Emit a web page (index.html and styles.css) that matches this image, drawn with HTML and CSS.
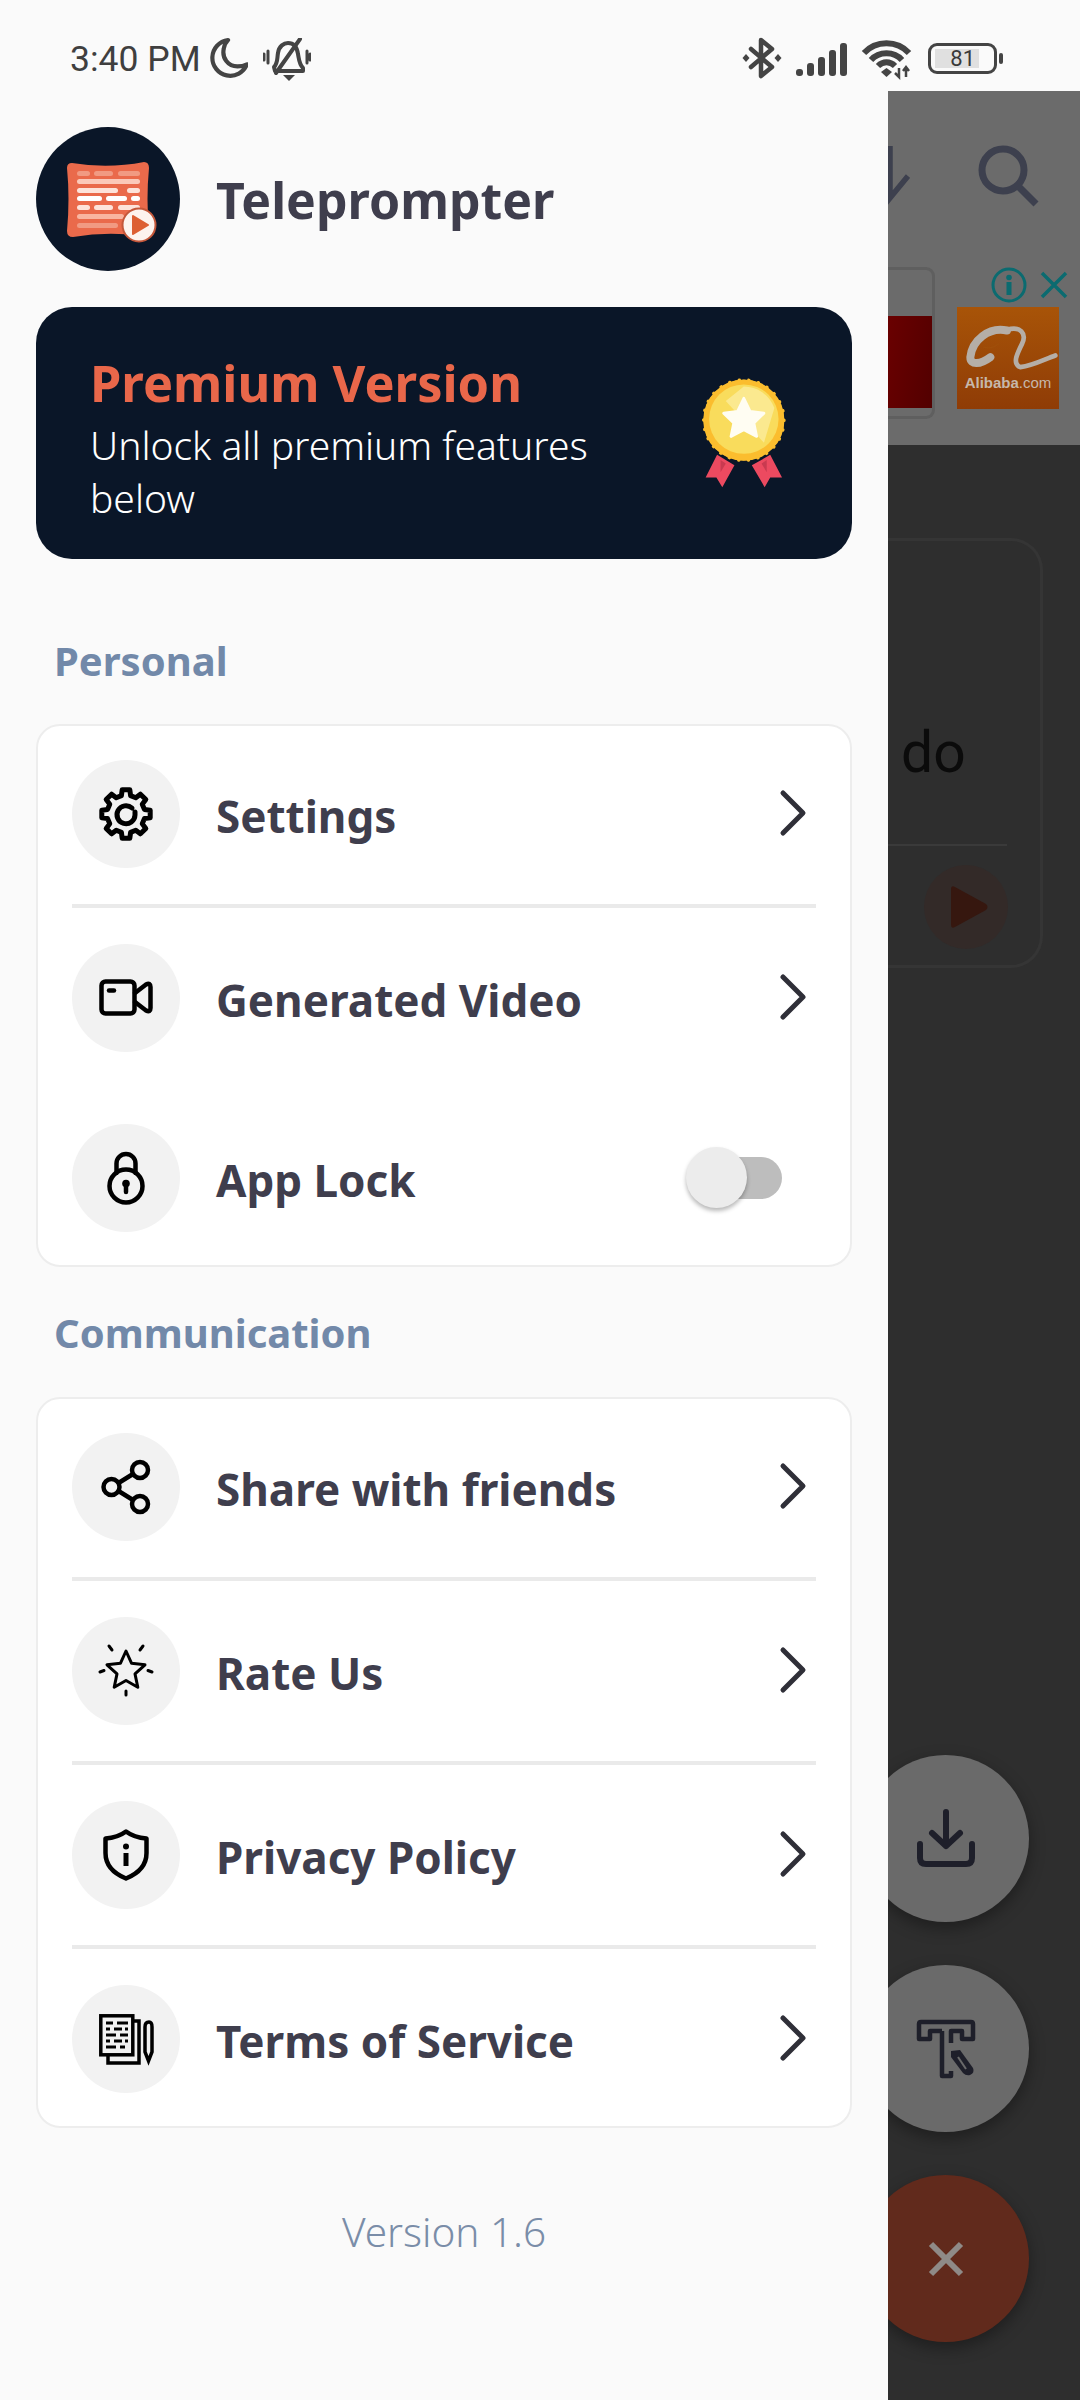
FILE: index.html
```html
<!DOCTYPE html>
<html lang="en">
<head>
<meta charset="utf-8">
<title>Teleprompter</title>
<link rel="stylesheet" href="styles.css">
</head>
<body>
<div class="screen">
  <header class="statusbar">
    <div class="status-left">
      <span class="time">3:40 PM</span>
      <svg class="moon" viewBox="0 0 38 38"><path d="M19 2 A17 17 0 1 0 37 25 C35 26 31 27 28 27 C19 27 13 19 15 10 C15.500 7 17 4 19 2 Z" fill="none" stroke="#444" stroke-width="4" stroke-linejoin="round"/></svg>
      <svg class="bell" viewBox="0 0 48 43"><g fill="none" stroke="#444" stroke-linecap="round" stroke-linejoin="round"><path d="M11 29 C15 25 14 20 15 15 C16 8 21 5 25 5 C31 5 34 9 35 16 C36 21 36 26 40 30 L40 33 H12 Z" stroke-width="4"/><path d="M37 1 L13 35" stroke-width="4"/><path d="M5 13 V25 M1 16 V22 M44 13 V25 M47 16 V22" stroke-width="3"/></g><path d="M20 37 H32 L26 43 Z" fill="#444"/></svg>
    </div>
    <div class="status-right">
      <svg class="bt" viewBox="0 0 38 42"><path d="M8 12 L29 30 L18 39 V3 L29 12 L8 30" fill="none" stroke="#444" stroke-width="4.500" stroke-linejoin="round" stroke-linecap="round"/><path d="M3 17 L6.500 21 L3 25 L-.5 21 Z M35 17 L38.500 21 L35 25 L31.500 21 Z" fill="#444"/></svg>
      <svg class="signal" viewBox="0 0 51 33"><g fill="#444"><rect x="0" y="26" width="7" height="7" rx="3"/><rect x="11" y="20" width="7" height="13" rx="3"/><rect x="22" y="14" width="7" height="19" rx="3"/><rect x="33" y="7" width="7" height="26" rx="3"/><rect x="44" y="0" width="7" height="33" rx="3"/></g></svg>
      <svg class="wifi" viewBox="0 0 49 36"><g fill="none" stroke="#444" stroke-width="6"><path d="M2 12 C14 -1 35 -1 47 12"/><path d="M9 19 C17 10 32 10 40 19"/><path d="M16 25 C21 20 28 20 33 25"/></g><path d="M19 31 L24.500 27 L30 31 L24.500 36 Z" fill="#444"/><path d="M37 27 V36 M33 32 L37 36 L37 27 M44 36 V26 M41 30 L44 26 L47 30" fill="none" stroke="#444" stroke-width="2.500"/></svg>
      <div class="battery-wrap">
        <div class="battery"><span class="battery-fill">81</span></div>
        <span class="battery-tip"></span>
      </div>
    </div>
  </header>

  <div class="body">
    <nav class="drawer">
      <div class="brand">
        <svg class="avatar" viewBox="0 0 144 144">
          <circle cx="72" cy="72" r="72" fill="#0a1628"/>
          <path d="M36 36 Q72 42 108 35 Q113 35 113 41 Q110 72 113 104 Q112 110 106 109 Q72 104 37 110 Q31 110 31 104 Q34 72 31 41 Q31 36 36 36 Z" fill="#ea6a4b"/>
          <g>
            <g fill="#f19a82"><rect x="41" y="44" width="13" height="5" rx="2.500"/><rect x="58" y="44" width="19" height="5" rx="2.500"/><rect x="82" y="44" width="22" height="5" rx="2.500"/><rect x="41" y="96" width="41" height="5" rx="2.500"/></g>
            <rect x="41" y="52" width="63" height="5" rx="2.500" fill="#fbc9b9"/>
            <g fill="#fde3da"><rect x="41" y="61" width="41" height="5" rx="2.500"/><rect x="91" y="61" width="13" height="5" rx="2.500"/><rect x="41" y="78" width="13" height="5" rx="2.500"/><rect x="58" y="78" width="19" height="5" rx="2.500"/><rect x="82" y="78" width="22" height="5" rx="2.500"/></g>
            <g fill="#fff"><rect x="41" y="69" width="25" height="5" rx="2.500"/><rect x="70" y="69" width="21" height="5" rx="2.500"/><rect x="95" y="69" width="9" height="5" rx="2.500"/></g>
            <rect x="41" y="87" width="47" height="5" rx="2.500" fill="#f9b5a0"/>
          </g>
          <circle cx="103" cy="98" r="16.500" fill="#fdf3ee" stroke="#c4573a" stroke-width="2"/>
          <path d="M97 89 L112 98 L97 107 Z" fill="#dd5f33" stroke="#dd5f33" stroke-width="2" stroke-linejoin="round"/>
        </svg>
        <span class="brand-name">Teleprompter</span>
      </div>

      <section class="premium">
        <div class="premium-text">
          <h2 class="premium-title">Premium Version</h2>
          <p class="premium-sub">Unlock all premium features below</p>
        </div>
        <svg class="medal" viewBox="60 55 265 330">
          <path d="M115 285 L165 315 L130 378 L113 350 L82 350 Z" fill="#ec4a60"/>
          <path d="M268 285 L215 315 L252 378 L268 350 L302 350 Z" fill="#ec4a60"/>
          <path d="M125 300 L140 310 L125 335 Z M258 300 L243 310 L258 335 Z" fill="#c93a50"/>
          <circle cx="192" cy="185" r="116" fill="#fbbd2e" stroke="#fbbd2e" stroke-width="9" stroke-dasharray="1 27" stroke-linecap="round"/>
          <circle cx="192" cy="185" r="117" fill="#fbbd2e"/>
          <circle cx="192" cy="182" r="100" fill="#f9dc5c"/>
          <path d="M192 88 A94 94 0 0 1 280 150 L250 250 L140 130 Z" fill="#fbe98f"/>
          <path d="M192 122 L210 160 L250 165 L221 193 L229 232 L192 213 L155 232 L163 193 L134 165 L174 160 Z" fill="#fffdf2" stroke="#fffdf2" stroke-width="8" stroke-linejoin="round"/>
        </svg>
      </section>

      <h3 class="section-title first">Personal</h3>
      <div class="card">
        <a class="row">
          <span class="icon-circle"><svg class="icon" viewBox="0 0 54 54"><g fill="none" stroke="#000" stroke-width="5" stroke-linejoin="round" stroke-linecap="round"><path d="M45.400 22.400 L51.200 23.170 L51.200 30.830 L45.400 31.600 L43.260 36.760 L46.820 41.400 L41.400 46.820 L36.760 43.260 L31.600 45.400 L30.830 51.200 L23.170 51.200 L22.400 45.400 L17.240 43.260 L12.600 46.820 L7.180 41.400 L10.740 36.760 L8.600 31.600 L2.800 30.830 L2.800 23.170 L8.600 22.400 L10.740 17.240 L7.180 12.600 L12.600 7.180 L17.240 10.740 L22.400 8.600 L23.170 2.800 L30.830 2.800 L31.600 8.600 L36.760 10.740 L41.400 7.180 L46.820 12.600 L43.260 17.240 Z"/><path d="M33 21 A9 9 0 1 0 36 28 V25"/></g></svg></span>
          <span class="row-label">Settings</span>
          <svg class="chevron" viewBox="0 0 34 48"><path d="M6 4 L26 24 L6 44" /></svg>
        </a>
        <div class="divider"></div>
        <a class="row">
          <span class="icon-circle"><svg class="icon" viewBox="0 0 54 54"><g fill="none" stroke="#000" stroke-width="4.500" stroke-linejoin="round" stroke-linecap="round"><rect x="2.500" y="10.500" width="33" height="32" rx="4"/><path d="M36 22 L47 13.500 Q51.500 11 51.500 16 V37 Q51.500 42 47 39.500 L36 31"/><path d="M10 19.500 H15"/></g></svg></span>
          <span class="row-label">Generated Video</span>
          <svg class="chevron" viewBox="0 0 34 48"><path d="M6 4 L26 24 L6 44" /></svg>
        </a>
        <a class="row row-spaced">
          <span class="icon-circle"><svg class="icon" viewBox="0 0 54 54"><g fill="none" stroke="#000" stroke-width="4.500" stroke-linecap="round"><path d="M17.500 22 V12.500 A9.500 9.500 0 0 1 36.500 12.500 V22"/><circle cx="27" cy="35" r="16.500"/><path d="M27 34 V41"/></g><circle cx="27" cy="32.500" r="3.800" fill="#000"/></svg></span>
          <span class="row-label">App Lock</span>
          <span class="toggle"><span class="toggle-thumb"></span></span>
        </a>
      </div>

      <h3 class="section-title">Communication</h3>
      <div class="card">
        <a class="row">
          <span class="icon-circle"><svg class="icon" viewBox="0 0 54 54"><g fill="none" stroke="#000" stroke-width="4.500"><circle cx="41" cy="10" r="8"/><circle cx="12.500" cy="27" r="8"/><circle cx="41" cy="44" r="8"/><path d="M19.500 23 L34 14 M19.500 31 L34 40"/></g></svg></span>
          <span class="row-label">Share with friends</span>
          <svg class="chevron" viewBox="0 0 34 48"><path d="M6 4 L26 24 L6 44" /></svg>
        </a>
        <div class="divider"></div>
        <a class="row">
          <span class="icon-circle"><svg class="icon" viewBox="0 0 54 54"><g fill="none" stroke="#000" stroke-linecap="round" stroke-linejoin="round"><path d="M27 7 L32.600 19.300 L46 20.800 L36 29.900 L38.800 43.200 L27 36.500 L15.200 43.200 L18 29.900 L8 20.800 L21.400 19.300 Z" stroke-width="3"/><path d="M10 2 L13 6 M44 2 L41 6 M1 28 L5 26.500 M53 28 L49 26.500 M27 47 V51" stroke-width="3"/></g></svg></span>
          <span class="row-label">Rate Us</span>
          <svg class="chevron" viewBox="0 0 34 48"><path d="M6 4 L26 24 L6 44" /></svg>
        </a>
        <div class="divider"></div>
        <a class="row">
          <span class="icon-circle"><svg class="icon" viewBox="0 0 54 54"><path d="M27 3.500 C33 8 40 10 47.500 10.500 V25 C47.500 38 38 46 27 50.500 C16 46 6.500 38 6.500 25 V10.500 C14 10 21 8 27 3.500 Z" fill="none" stroke="#000" stroke-width="4.500" stroke-linejoin="round"/><circle cx="27" cy="18.500" r="3" fill="#000"/><rect x="24.500" y="25" width="5" height="13" fill="#000"/></svg></span>
          <span class="row-label">Privacy Policy</span>
          <svg class="chevron" viewBox="0 0 34 48"><path d="M6 4 L26 24 L6 44" /></svg>
        </a>
        <div class="divider"></div>
        <a class="row">
          <span class="icon-circle"><svg class="icon" viewBox="0 0 54 54"><g fill="none" stroke="#000" stroke-width="3.500"><rect x="1.800" y="3.800" width="32" height="39"/><path d="M35 9 H40 V51 H9 V44"/><path d="M46 15 Q46 10 50 10 Q53 10 53 15 V40 L49.500 49 L46 40 Z"/></g><path d="M7 11 H14 M18 11 H29 M7 17 H11 M15 17 H23 M26 17 H29 M7 23 H17 M21 23 H29 M7 29 H11 M15 29 H23 M26 29 H29 M7 35 H17 M21 35 H26" stroke="#000" stroke-width="3" fill="none"/></svg></span>
          <span class="row-label">Terms of Service</span>
          <svg class="chevron" viewBox="0 0 34 48"><path d="M6 4 L26 24 L6 44" /></svg>
        </a>
      </div>

      <p class="version">Version 1.6</p>
    </nav>

    <aside class="behind">
      <div class="behind-top">
        <div class="appbar">
          <svg class="sort-icon" viewBox="0 0 22 60"><path d="M2 0 V52 L20 30" fill="none" stroke="#3d404e" stroke-width="5.500"/></svg>
          <svg class="search-icon" viewBox="0 0 64 64"><g fill="none" stroke="#3d404e" stroke-width="7"><circle cx="27" cy="24" r="21"/><path d="M42 40 L60 58"/></g></svg>
        </div>
        <div class="ad">
          <div class="ad-card"><div class="ad-photo"></div></div>
          <div class="ad-side">
            <div class="ad-actions">
              <svg class="ad-info" viewBox="0 0 36 36"><circle cx="18" cy="18" r="16" fill="none" stroke="#0b6b70" stroke-width="3"/><circle cx="18" cy="10.500" r="2.800" fill="#0b6b70"/><rect x="15.500" y="15" width="5" height="13" fill="#0b6b70"/></svg>
              <svg class="ad-close" viewBox="0 0 28 28"><path d="M2 2 L26 26 M26 2 L2 26" stroke="#0b6b70" stroke-width="3.500"/></svg>
            </div>
            <div class="alibaba">
              <svg class="alibaba-logo" viewBox="0 0 306 200"><g fill="none" stroke="#b5aea7" stroke-linecap="round"><path d="M150 70 C95 58 45 100 40 150 C40 175 70 172 100 150" stroke-width="24"/><path d="M150 68 C190 55 210 80 195 110 C180 140 165 170 190 180 C230 175 265 155 295 145" stroke-width="14"/><path d="M80 120 C95 125 110 122 125 110" stroke="#a04f0a" stroke-width="4"/></g></svg>
              <span class="alibaba-name">Alibaba<span class="alibaba-tld">.com</span></span>
            </div>
          </div>
        </div>
      </div>
      <div class="doc-card">
        <div class="doc-text">do</div>
        <div class="doc-rule"></div>
        <div class="doc-play"><svg class="doc-play-icon" viewBox="0 0 40 44"><path d="M2 4 Q2 0 6 2 L37 19 Q40 22 37 25 L6 42 Q2 44 2 40 Z" fill="#36170f"/></svg></div>
      </div>
      <div class="fabs">
        <div class="fab"><svg class="fab-icon" viewBox="0 0 60 60"><g fill="none" stroke="#1e1f2a" stroke-width="6" stroke-linecap="round" stroke-linejoin="round"><path d="M30 3 V37 M16 24 L30 37 L44 24"/><path d="M4 35 V49 Q4 55 10 55 H50 Q56 55 56 49 V35"/></g></svg></div>
        <div class="fab"><svg class="fab-icon" viewBox="0 0 60 60"><g fill="none" stroke="#1e1f2a" stroke-width="4.500" stroke-linejoin="round"><path d="M6 20 H3 V5 Q3 3 5 3 H55 Q57 3 57 5 V20 H46 V12 H35 V24 M26 12 H14 V20 H6 M26 12 V57 H35 V52"/></g><path d="M35 32 L44 31 L57 49 Q59 54 54 56 Q50 57 47 54 L35 38 Z" fill="#1e1f2a"/><path d="M42 38 L50 50" stroke="#6a6a6a" stroke-width="2"/></svg></div>
        <div class="fab fab-close"><svg class="fab-icon-x" viewBox="0 0 36 36"><path d="M3 3 L33 33 M33 3 L3 33" stroke="#8f8a87" stroke-width="6"/></svg></div>
      </div>
    </aside>
  </div>
</div>
</body>
</html>
```

FILE: styles.css
```css
* { box-sizing: border-box; }
html, body { margin: 0; padding: 0; }
body { width: 1080px; height: 2400px; overflow: hidden; font-family: "Noto Sans", sans-serif; background: #fafafa; }
h2, h3, p { margin: 0; }

.screen { display: flex; flex-direction: column; width: 1080px; height: 2400px; }

.statusbar { flex: 0 0 91px; display: flex; justify-content: space-between; align-items: flex-start; padding: 0 77px 0 70px; background: #fafafa; }
.status-left { display: flex; align-items: flex-start; padding-top: 38px; }
.time { font-family: Roboto, sans-serif; font-size: 35.5px; line-height: 42px; color: #3f3f3f; width: 137px; white-space: nowrap; }
.moon { width: 40px; height: 40px; margin-left: 1px; }
.bell { width: 48px; height: 43px; margin-left: 15px; }
.status-right { display: flex; align-items: flex-start; padding-top: 37px; }
.bt { width: 38px; height: 42px; overflow: visible; }
.signal { width: 51px; height: 33px; margin: 6px 0 0 15px; }
.wifi { width: 49px; height: 36px; margin: 4px 0 0 15px; overflow: visible; }
.battery-wrap { display: flex; align-items: center; margin: 6px 0 0 17px; }
.battery { width: 69px; height: 31px; border: 3px solid #444; border-radius: 9px; padding: 3px 4px; }
.battery-fill { display: block; width: 44px; height: 19px; background: #e0e0e0; font-family: Roboto, sans-serif; font-size: 22px; line-height: 19px; color: #3a3a3a; text-align: right; padding-right: 4px; }
.battery-tip { width: 4px; height: 11px; background: #444; border-radius: 2px; margin-left: 2px; }

.body { flex: 1; display: flex; min-height: 0; }

.drawer { flex: 0 0 888px; background: #fafafa; padding: 36px 36px 0; z-index: 1; }

.brand { display: flex; align-items: center; gap: 36px; }
.avatar { width: 144px; height: 144px; flex: none; }
.brand-name { font-size: 50px; font-weight: 700; color: #3f3e4d; line-height: 60px; margin-top: 2px; }

.premium { display: flex; align-items: center; justify-content: space-between; height: 252px; margin-top: 36px; padding: 0 62px 0 54px; background: #0a1628; border-radius: 36px; }
.premium-text { width: 540px; padding-top: 13px; }
.premium-title { font-size: 50.500px; font-weight: 700; line-height: 56px; color: #e9674a; }
.premium-sub { margin-top: 7px; font-size: 39px; font-weight: 300; line-height: 53px; color: #fff; }
.medal { width: 92px; height: 114.600px; flex: none; margin-top: -1px; }

.section-title { height: 60px; font-size: 40px; font-weight: 700; line-height: 60px; color: #7289a9; padding-left: 18px; margin: 36px 0 34px; }
.section-title.first { margin: 72px 0 33px; }

.card { background: #fff; border: 2px solid #ededed; border-radius: 24px; padding: 34px 34px 33px; }
.row { display: flex; align-items: center; height: 108px; }
.row-spaced { margin-top: 72px; }
.divider { height: 4px; margin: 36px 0; background: #eaeaea; }
.icon-circle { display: flex; align-items: center; justify-content: center; width: 108px; height: 108px; flex: none; border-radius: 50%; background: #f2f2f2; }
.icon { width: 54px; height: 54px; overflow: visible; }
.row-label { flex: 1; margin-left: 36px; font-size: 44px; font-weight: 700; line-height: 60px; color: #3f3e4d; padding-top: 4px; }
.chevron { width: 34px; height: 48px; margin: -2px 5px 0 0; fill: none; stroke: #2f2f38; stroke-width: 5; stroke-linecap: round; stroke-linejoin: round; flex: none; }

.toggle { position: relative; display: block; width: 92px; height: 42px; margin-right: 34px; border-radius: 21px; background: #bdbdbd; flex: none; }
.toggle-thumb { position: absolute; left: -4px; top: -10px; width: 61px; height: 61px; border-radius: 50%; background: #ececec; box-shadow: 0 3px 4px rgba(0,0,0,.28); }

.version { margin-top: 76px; text-align: center; font-size: 40.500px; font-weight: 300; line-height: 56px; color: #7a8da8; }

.behind { flex: 1; position: relative; overflow: hidden; background: #2e2e2e; }
.behind-top { height: 354px; background: #6b6b6b; }
.appbar { display: flex; align-items: flex-start; height: 171px; padding-top: 55px; }
.sort-icon { width: 22px; height: 60px; flex: none; }
.search-icon { width: 64px; height: 64px; margin-left: 66px; flex: none; overflow: visible; }

.ad { display: flex; gap: 22px; padding-top: 5px; }
.ad-card { width: 47px; height: 152px; border: 3px solid #5f5f5f; border-left: 0; border-radius: 0 9px 9px 0; padding-top: 46px; flex: none; }
.ad-photo { width: 44px; height: 92px; background: linear-gradient(100deg, #6a0000, #520000); }
.ad-side { width: 102px; flex: none; }
.ad-actions { display: flex; align-items: flex-start; height: 40px; padding-left: 35px; margin-left: -1px; }
.ad-info { width: 36px; height: 36px; flex: none; }
.ad-close { width: 28px; height: 28px; margin: 4px 0 0 13px; flex: none; }
.alibaba { display: flex; flex-direction: column; align-items: center; width: 102px; height: 102px; background: linear-gradient(#a85408, #8f3c06); }
.alibaba-logo { width: 102px; height: 67px; flex: none; }
.alibaba-name { font-family: "Liberation Sans", sans-serif; font-size: 15px; font-weight: 700; line-height: 18px; color: #c6b8ab; }
.alibaba-tld { font-weight: 400; }

.doc-card { width: 155px; height: 430px; margin-top: 93px; border: 3px solid #353535; border-left: 0; border-radius: 0 32px 32px 0; }
.doc-text { height: 303px; padding: 179px 0 0 13px; font-family: Roboto, sans-serif; font-size: 57px; line-height: 66px; color: #0b0b0b; }
.doc-rule { width: 119px; height: 2px; background: #3a3a3a; }
.doc-play { display: flex; align-items: center; justify-content: center; width: 84px; height: 84px; margin: 19px 0 0 36px; border-radius: 50%; background: #332a28; }
.doc-play-icon { width: 40px; height: 44px; margin-left: 6px; }

.fabs { position: absolute; top: 1664px; right: 51px; display: flex; flex-direction: column; gap: 43px; }
.fab { display: flex; align-items: center; justify-content: center; width: 167px; height: 167px; border-radius: 50%; background: #6a6a6a; box-shadow: 0 6px 16px rgba(0,0,0,.35); }
.fab-close { background: #612a1c; }
.fab-icon { width: 60px; height: 60px; }
.fab-icon-x { width: 36px; height: 36px; }
```
